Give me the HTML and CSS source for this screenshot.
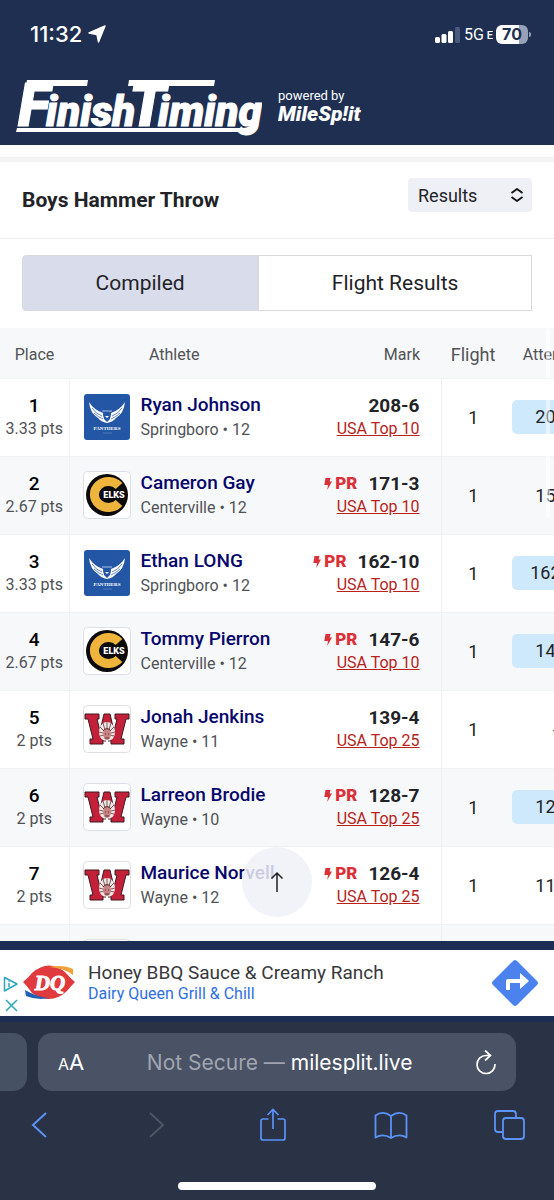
FILE: index.html
```
<!DOCTYPE html>
<html lang="en">
<head>
  <meta charset="UTF-8">
  <meta name="viewport" content="width=device-width, initial-scale=1.0">
  <title>Boys Hammer Throw - Results</title>
  <link rel="stylesheet" href="styles.css">
</head>
<body>

  <!-- Team logos, reused in the rows -->
  <svg class="sprite" aria-hidden="true">
    <symbol id="panthers" viewBox="0 0 48 48">
      <rect x="1" y="1" width="46" height="46" rx="3" fill="#2456a6"/>
      <path d="M6 9Q11 17 20 20l1 6q2 2 3 3 1-1 3-3l1-6Q37 17 42 9 41 20 33 25q-3 4-9 5-6-1-9-5Q7 20 6 9z" fill="#fff"/>
      <path d="M9 15q4 6 10 8M11 20q4 4 9 6M39 15q-4 6-10 8M37 20q-4 4-9 6" fill="none" stroke="#2456a6" stroke-width=".7"/>
      <path d="M19 18h10" stroke="#a9c0e2" stroke-width="1"/>
      <path d="M20 21h8l-1 4-3 2-3-2z" fill="#2456a6"/>
      <path d="M22 23h4l-2 2z" fill="#fff"/>
      <text x="24" y="37" class="panthers-text">PANTHERS</text>
      <path d="M20 40h9" stroke="#5b83c2" stroke-width=".8"/>
    </symbol>
    <symbol id="elks" viewBox="0 0 48 48">
      <rect x=".5" y=".5" width="47" height="47" rx="4" fill="#fff" stroke="#dddfe4"/>
      <circle cx="24" cy="24" r="21" fill="#0b0b0b"/>
      <path d="M36 15A14 13 0 1 0 36 32" fill="none" stroke="#efb43c" stroke-width="9"/>
      <rect x="20" y="20" width="23" height="8" fill="#0b0b0b"/>
      <text x="31" y="27" class="elks-text">ELKS</text>
    </symbol>
    <symbol id="wayne" viewBox="0 0 48 48">
      <rect x=".5" y=".5" width="47" height="47" rx="4" fill="#fff" stroke="#dddfe4"/>
      <path d="M2 9h14v5h-2l3 12 4-17h6l4 17 3-12h-2V9h14v5h-3l-5 20h3v5H28v-5h1l-5-12-5 12h1v5H7v-5h3L5 14H2z" fill="#c5203a" stroke="#3a1a20" stroke-width="1"/>
      <path d="M24 17c5 0 8 5 8 10 0 4-2 7-4 8h-8c-2-1-4-4-4-8 0-5 3-10 8-10z" fill="#efe6e6"/>
      <path d="M24 17v7M20 18l2 7M28 18l-2 7M17 22l4 4M31 22l-4 4M16 27l4 1M32 27l-4 1M17 31l4-1M31 31l-4-1" stroke="#6f4a4a" stroke-width=".9"/>
      <ellipse cx="24" cy="29" rx="4" ry="6" fill="#c98283"/>
      <path d="M20 26c2-3 6-3 8 0M22 29h1M25 29h1M22 33h4M20 36h3M25 36h3" fill="none" stroke="#5a2c30" stroke-width="1"/>
    </symbol>
    <symbol id="bolt" viewBox="0 0 8 12">
      <path d="M1.500 0h5L5.600 3.600H8L3.200 12l.8-5H.3z" fill="#dc3038"/>
    </symbol>
  </svg>

  <header class="site-header">
    <div class="status-bar">
      <div class="status-time">
        11:32
        <svg width="18" height="18" viewBox="0 0 18 18"><path d="M17 1L10.500 17 9 9.500 1 8z" fill="#fff" stroke="#fff" stroke-width="1.400" stroke-linejoin="round"/></svg>
      </div>
      <div class="status-right">
        <svg width="26" height="17" viewBox="0 0 26 17">
          <rect x="0" y="11" width="5" height="6" rx="1.500" fill="#fff"/>
          <rect x="6.500" y="8" width="5" height="9" rx="1.500" fill="#fff"/>
          <rect x="13" y="5" width="5" height="12" rx="1.500" fill="#fff"/>
          <rect x="20" y="1" width="5" height="16" rx="1.500" fill="#4a5b7f"/>
        </svg>
        <span class="network">5G</span>
        <span class="network-type">E</span>
        <span class="battery">70</span>
      </div>
    </div>
    <div class="brand">
      <svg class="brand-logo" width="250" height="60" viewBox="0 0 250 60" role="img" aria-label="FinishTiming">
        <text y="50" class="logo-text"><tspan x="6" class="logo-cap">F</tspan><tspan x="34">inish</tspan><tspan x="117" class="logo-cap">T</tspan><tspan x="146">iming</tspan></text>
        <path d="M15 4h61l-1 6H14zM117 4h86l-1 6h-86z" fill="#fff"/>
        <path d="M5 52h226q8 0 11-9h4q-3 13-15 13H4z" fill="#fff"/>
      </svg>
      <div class="powered">
        <span class="powered-by">powered by</span>
        <span class="milesplit">MileSp!it</span>
      </div>
    </div>
  </header>

  <main class="results">
    <div class="event-bar">
      <h1 class="event-title">Boys Hammer Throw</h1>
      <div class="view-select">
        <select aria-label="View">
          <option>Results</option>
        </select>
        <svg width="14" height="14" viewBox="0 0 14 14"><path d="M1.500 5L7 1l5.500 4M1.500 9L7 13l5.500-4" fill="none" stroke="#111" stroke-width="1.800"/></svg>
      </div>
    </div>

    <div class="tabs">
      <button type="button" class="tab active">Compiled</button>
      <button type="button" class="tab">Flight Results</button>
    </div>

    <div class="table-wrap">
      <table class="results-table">
        <thead>
          <tr>
            <th class="place">Place</th>
            <th class="athlete">Athlete</th>
            <th class="mark">Mark</th>
            <th class="flight">Flight</th>
            <th class="attempt">Attempt 1</th>
          </tr>
        </thead>
        <tbody>
          <tr>
            <td class="place"><b>1</b><span>3.33 pts</span></td>
            <td class="athlete"><div class="who"><svg class="team"><use href="#panthers"/></svg><div><a href="#">Ryan Johnson</a><span>Springboro • 12</span></div></div></td>
            <td class="mark"><div><b>208-6</b></div><a href="#">USA Top 10</a></td>
            <td class="flight">1</td>
            <td class="attempt"><span class="best">208-6</span></td>
          </tr>
          <tr>
            <td class="place"><b>2</b><span>2.67 pts</span></td>
            <td class="athlete"><div class="who"><svg class="team"><use href="#elks"/></svg><div><a href="#">Cameron Gay</a><span>Centerville • 12</span></div></div></td>
            <td class="mark"><div><svg class="bolt"><use href="#bolt"/></svg><em>PR</em><b>171-3</b></div><a href="#">USA Top 10</a></td>
            <td class="flight">1</td>
            <td class="attempt">159-1</td>
          </tr>
          <tr>
            <td class="place"><b>3</b><span>3.33 pts</span></td>
            <td class="athlete"><div class="who"><svg class="team"><use href="#panthers"/></svg><div><a href="#">Ethan LONG</a><span>Springboro • 12</span></div></div></td>
            <td class="mark"><div><svg class="bolt"><use href="#bolt"/></svg><em>PR</em><b>162-10</b></div><a href="#">USA Top 10</a></td>
            <td class="flight">1</td>
            <td class="attempt"><span class="best">162-10</span></td>
          </tr>
          <tr>
            <td class="place"><b>4</b><span>2.67 pts</span></td>
            <td class="athlete"><div class="who"><svg class="team"><use href="#elks"/></svg><div><a href="#">Tommy Pierron</a><span>Centerville • 12</span></div></div></td>
            <td class="mark"><div><svg class="bolt"><use href="#bolt"/></svg><em>PR</em><b>147-6</b></div><a href="#">USA Top 10</a></td>
            <td class="flight">1</td>
            <td class="attempt"><span class="best">147-6</span></td>
          </tr>
          <tr>
            <td class="place"><b>5</b><span>2 pts</span></td>
            <td class="athlete"><div class="who"><svg class="team"><use href="#wayne"/></svg><div><a href="#">Jonah Jenkins</a><span>Wayne • 11</span></div></div></td>
            <td class="mark"><div><b>139-4</b></div><a href="#">USA Top 25</a></td>
            <td class="flight">1</td>
            <td class="attempt">--</td>
          </tr>
          <tr>
            <td class="place"><b>6</b><span>2 pts</span></td>
            <td class="athlete"><div class="who"><svg class="team"><use href="#wayne"/></svg><div><a href="#">Larreon Brodie</a><span>Wayne • 10</span></div></div></td>
            <td class="mark"><div><svg class="bolt"><use href="#bolt"/></svg><em>PR</em><b>128-7</b></div><a href="#">USA Top 25</a></td>
            <td class="flight">1</td>
            <td class="attempt"><span class="best">128-7</span></td>
          </tr>
          <tr>
            <td class="place"><b>7</b><span>2 pts</span></td>
            <td class="athlete"><div class="who"><svg class="team"><use href="#wayne"/></svg><div><a href="#">Maurice Norvell</a><span>Wayne • 12</span></div></div></td>
            <td class="mark"><div><svg class="bolt"><use href="#bolt"/></svg><em>PR</em><b>126-4</b></div><a href="#">USA Top 25</a></td>
            <td class="flight">1</td>
            <td class="attempt">119-2</td>
          </tr>
          <tr>
            <td class="place"></td>
            <td class="athlete"><div class="who"><svg class="team"><use href="#elks"/></svg></div></td>
            <td class="mark"></td>
            <td class="flight"></td>
            <td class="attempt"></td>
          </tr>
        </tbody>
      </table>
      <div class="scroll-thumb"></div>
    </div>

    <button type="button" class="to-top" aria-label="Back to top">
      <svg width="14" height="22" viewBox="0 0 14 22"><path d="M7 21V2M1.500 7.500L7 2l5.500 5.500" fill="none" stroke="#222" stroke-width="1.500"/></svg>
    </button>
  </main>

  <aside class="ad">
    <div class="ad-marks">
      <svg width="16" height="16" viewBox="0 0 16 16"><path d="M1.500 1.500L14 8 1.500 15z" fill="none" stroke="#2ba7bf" stroke-width="1.500" stroke-linejoin="round"/><path d="M6 7v4M6 4.500v1.200" stroke="#2ba7bf" stroke-width="1.500"/></svg>
      <svg width="16" height="14" viewBox="0 0 16 14"><path d="M3 2l11 11M14 2L3 13" stroke="#2ba7bf" stroke-width="1.500"/></svg>
    </div>
    <svg class="dq" width="52" height="38" viewBox="0 0 52 38">
      <path d="M0 18Q6 13 9 9 26-6 43 9q4 5 9 9-4 4-8 9-16 15-35 2-4-6-9-11z" fill="#e03a3e"/>
      <path d="M26 3q14-3 24 2v6Q41 4 26 3z" fill="#f0a13a"/>
      <path d="M2 26q12 7 24 8l-8 1Q10 35 3 32z" fill="#1f62b5"/>
      <text x="27" y="26" class="dq-text">DQ</text>
    </svg>
    <div class="ad-copy">
      <span class="ad-title">Honey BBQ Sauce &amp; Creamy Ranch</span>
      <a href="#" class="ad-link">Dairy Queen Grill &amp; Chill</a>
    </div>
    <svg width="46" height="46" viewBox="0 0 46 46">
      <path d="M21 1q2-2 4 0l20 20q2 2 0 4L25 45q-2 2-4 0L1 25q-2-2 0-4z" fill="#4c82ee"/>
      <path d="M14 30V21q0-2 2-2h12v-6l9 8-9 8v-6H18v7z" fill="#fff"/>
    </svg>
  </aside>

  <footer class="browser">
    <div class="address-row">
      <div class="prev-tab"></div>
      <div class="address">
        <button type="button" class="text-size" aria-label="Text size"><small>A</small>A</button>
        <button type="button" class="url"><span>Not Secure —</span> milesplit.live</button>
        <button type="button" aria-label="Reload">
          <svg width="22" height="26" viewBox="0 0 22 26"><path d="M15 6.500H11A9 9 0 1 0 20 15M10 1.500L15.500 6.500 10 11.500" fill="none" stroke="#fff" stroke-width="1.700"/></svg>
        </button>
      </div>
    </div>
    <nav class="toolbar">
      <button type="button" aria-label="Back"><svg width="30" height="34" viewBox="0 0 30 34"><path d="M21 5L8 17l13 12" fill="none" stroke="#5b93f8" stroke-width="2"/></svg></button>
      <button type="button" aria-label="Forward"><svg width="30" height="34" viewBox="0 0 30 34"><path d="M9 5l13 12L9 29" fill="none" stroke="#4c5561" stroke-width="2"/></svg></button>
      <button type="button" aria-label="Share"><svg width="30" height="34" viewBox="0 0 30 34"><path d="M10.500 11H5q-2 0-2 2v17q0 2 2 2h20q2 0 2-2V13q0-2-2-2h-5.500M15 21V2M9.500 7L15 1.500 20.500 7" fill="none" stroke="#5b93f8" stroke-width="1.700"/></svg></button>
      <button type="button" aria-label="Bookmarks"><svg width="34" height="34" viewBox="0 0 34 34"><path d="M17 8Q9 2 1.500 7.500v22Q9 25 17 30q8-5 15.500-.5v-22Q25 2 17 8zv22" fill="none" stroke="#5b93f8" stroke-width="1.800" stroke-linejoin="round"/></svg></button>
      <button type="button" aria-label="Tabs"><svg width="32" height="34" viewBox="0 0 32 34"><path d="M9 24H4q-3 0-3-3V6q0-3 3-3h15q3 0 3 3v3" fill="none" stroke="#5b93f8" stroke-width="1.800"/><rect x="9" y="10" width="21" height="21" rx="3" fill="none" stroke="#5b93f8" stroke-width="1.800"/></svg></button>
    </nav>
    <div class="home-indicator"></div>
  </footer>

</body>
</html>
```
FILE: styles.css
```
* {
  box-sizing: border-box;
}
body {
  margin: 0;
  height: 100vh;
  display: flex;
  flex-direction: column;
  font-family: Roboto, "Liberation Sans", sans-serif;
  font-size: 16px;
  color: #212327;
  background-color: #fff;
  overflow: hidden;
}
button {
  font: inherit;
  color: inherit;
  background: none;
  border: 0;
  padding: 0;
}
svg {
  display: block;
  flex-shrink: 0;
}
.sprite {
  display: none;
}
.panthers-text {
  font: bold 5px "Liberation Serif", serif;
  fill: #fff;
  text-anchor: middle;
}
.elks-text {
  font: 900 9px Roboto, sans-serif;
  fill: #fff;
  text-anchor: middle;
}

/* header */
.site-header {
  background-color: #1e2f52;
  color: #fff;
  padding-bottom: 9px;
}
.status-bar {
  display: flex;
  justify-content: space-between;
  align-items: center;
  height: 68px;
  padding: 0 24px 0 30px;
  font-family: Inter, sans-serif;
}
.status-time {
  display: flex;
  align-items: center;
  gap: 6px;
  font-size: 22px;
  font-weight: 500;
}
.status-right {
  display: flex;
  align-items: center;
  gap: 3px;
}
.network {
  font: 16px Roboto, sans-serif;
}
.network-type {
  padding-top: 3px;
  font: 500 11px Roboto, sans-serif;
}
.battery {
  position: relative;
  width: 32px;
  margin-right: 2px;
  border-radius: 6px;
  background: linear-gradient(to right, #fff 72%, #97a1b8 72%);
  color: #1e2f52;
  font-size: 16px;
  font-weight: 700;
  line-height: 19px;
  text-align: center;
}
.battery::after {
  content: "";
  position: absolute;
  top: 7px;
  right: -3px;
  width: 2px;
  height: 5px;
  border-radius: 0 2px 2px 0;
  background-color: #97a1b8;
}
.brand {
  display: flex;
  align-items: center;
  gap: 16px;
  padding: 8px 12px 0;
}
.logo-text {
  font: italic 900 42px Roboto, sans-serif;
  fill: #fff;
  stroke: #fff;
  stroke-width: 1px;
}
.logo-cap {
  font-size: 60px;
}
.powered {
  display: flex;
  flex-direction: column;
}
.powered-by {
  font-size: 13px;
  line-height: 16px;
}
.milesplit {
  font-size: 21px;
  line-height: 20px;
  font-style: italic;
  font-weight: 900;
}

/* event */
.results {
  flex: 1;
  min-height: 0;
  position: relative;
  overflow: hidden;
  padding-top: 12px;
}
.event-bar {
  display: flex;
  justify-content: space-between;
  align-items: flex-start;
  padding: 16px 22px;
  border-top: 5px solid #f3f3f3;
  border-bottom: 1px solid #ececef;
}
.event-title {
  margin: 0;
  font-size: 21px;
  font-weight: 700;
  line-height: 44px;
}
.view-select {
  display: grid;
  align-items: center;
}
.view-select select,
.view-select svg {
  grid-area: 1 / 1;
}
.view-select select {
  appearance: none;
  width: 124px;
  height: 34px;
  padding: 0 10px;
  border: 0;
  border-radius: 4px;
  background-color: #efeff6;
  color: #212327;
  font: 18px Roboto, sans-serif;
}
.view-select svg {
  justify-self: end;
  margin-right: 8px;
  pointer-events: none;
}
.tabs {
  display: flex;
  padding: 16px 22px 17px;
}
.tab {
  flex: 1 1 auto;
  height: 56px;
  font-size: 21px;
  border: 1px solid #d9dadf;
}
.tab.active {
  background-color: #d9dcea;
  border-radius: 4px 0 0 4px;
}

/* results table */
.table-wrap {
  position: relative;
}
.results-table {
  table-layout: fixed;
  width: calc(100% + 50px);
  border-collapse: collapse;
}
.results-table tr {
  height: 78px;
  border-bottom: 1px solid #f0f1f4;
}
.results-table thead tr {
  height: 50px;
}
.results-table thead tr,
.results-table tbody tr:nth-child(even) {
  background-color: #f7f8fa;
}
.results-table th,
.results-table td {
  padding: 0;
}
.results-table .place {
  width: 69px;
  text-align: center;
}
.results-table .athlete {
  text-align: left;
  padding-left: 13px;
}
.results-table th.athlete {
  padding-left: 80px;
}
.results-table .mark {
  width: 142px;
  padding-right: 21px;
  text-align: right;
}
.results-table .flight {
  width: 71px;
  padding-right: 7px;
  font-size: 18px;
  text-align: center;
}
.results-table .attempt {
  width: 92px;
  text-align: center;
}
.results-table th {
  padding-top: 3px;
  color: #505256;
  font-weight: 400;
}
td.place,
td.mark {
  border-right: 1px solid #f0f1f4;
}
td.place b,
td.place span {
  display: block;
  line-height: 23px;
}
td.place b {
  color: #000;
  font-size: 19px;
  font-weight: 500;
}
td.place span,
.who span {
  color: #505256;
}
.who {
  display: flex;
  align-items: center;
  gap: 10px;
}
.who a,
.who span {
  display: block;
  line-height: 25px;
}
.who a {
  color: #07076b;
  font-size: 19px;
  font-weight: 500;
  text-decoration: none;
}
.team {
  width: 48px;
  height: 48px;
}
td.mark div {
  display: flex;
  justify-content: flex-end;
  align-items: center;
  line-height: 23px;
}
td.mark b {
  font-size: 19px;
}
td.mark em {
  margin: 0 11px 0 3px;
  color: #dc3038;
  font-size: 17px;
  font-style: normal;
  font-weight: 900;
}
td.mark a {
  color: #b8221c;
  line-height: 23px;
}
.bolt {
  width: 8px;
  height: 12px;
}
td.attempt {
  font-size: 18px;
}
.best {
  display: block;
  border-radius: 5px;
  background-color: #cfe9fc;
  line-height: 34px;
}
.scroll-thumb {
  position: absolute;
  top: 0;
  right: 4px;
  width: 4px;
  height: 190px;
  border-radius: 2px;
  background-color: rgba(255, 255, 255, .5);
}
.to-top {
  position: absolute;
  bottom: 24px;
  left: 50%;
  display: flex;
  align-items: center;
  justify-content: center;
  width: 70px;
  height: 70px;
  margin-left: -35px;
  border-radius: 50%;
  background-color: rgba(240, 241, 248, .84);
}

/* ad */
.ad {
  display: flex;
  align-items: center;
  padding: 0 16px 0 3px;
  height: 81px;
  background-color: #fff;
  border-top: 9px solid #1c2e54;
  border-bottom: 6px solid #1c2e54;
}
.ad-marks {
  display: flex;
  flex-direction: column;
  gap: 6px;
  padding-top: 22px;
}
.dq {
  margin: 0 13px 0 4px;
}
.dq-text {
  font: italic bold 21px "Liberation Serif", serif;
  fill: #fff;
  stroke: #fff;
  stroke-width: 1px;
  text-anchor: middle;
}
.ad-copy {
  flex: 1;
  display: flex;
  flex-direction: column;
  line-height: 21px;
}
.ad-title {
  color: #37383b;
  font-size: 19px;
}
.ad-link {
  color: #2f6fe4;
  font-size: 16px;
  text-decoration: none;
}

/* browser bars */
.browser {
  padding: 11px 0 10px;
  background-color: #2a3345;
  color: #fff;
  font-family: Inter, sans-serif;
}
.address-row {
  display: flex;
  gap: 11px;
  padding-right: 38px;
}
.prev-tab {
  width: 27px;
  border-radius: 0 14px 14px 0;
  background-color: #465163;
}
.address {
  flex: 1;
  display: flex;
  align-items: center;
  height: 58px;
  padding: 0 19px 0 20px;
  border-radius: 14px;
  background-color: #4a5265;
}
.text-size {
  font-size: 22px;
}
.text-size small {
  font-size: 16px;
}
.url {
  flex: 1;
  font-size: 21px;
}
.url span {
  color: #a0a5b1;
}
.toolbar {
  display: flex;
  justify-content: space-between;
  padding: 17px 28px 40px 25px;
}
.home-indicator {
  width: 198px;
  height: 8px;
  margin: 0 auto;
  border-radius: 4px;
  background-color: #fff;
}
```
